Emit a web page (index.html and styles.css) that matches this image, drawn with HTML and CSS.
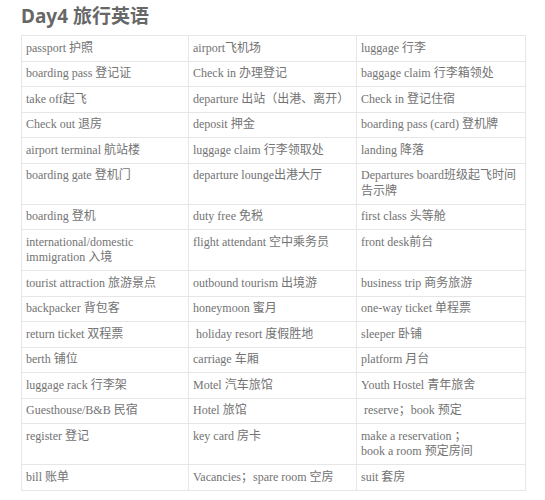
FILE: index.html
```html
<!DOCTYPE html>
<html lang="zh">
<head>
<meta charset="utf-8">
<title>Day4 旅行英语</title>
<link rel="stylesheet" href="styles.css">
</head>
<body>
<div class="page">
  <h1 class="title">Day4 旅行英语</h1>
  <table class="vocab">
    <colgroup><col class="c1"><col class="c2"><col class="c3"></colgroup>
    <tbody>
      <tr><td>passport 护照</td><td>airport飞机场</td><td>luggage 行李</td></tr>
      <tr><td>boarding pass 登记证</td><td>Check in 办理登记</td><td>baggage claim 行李箱领处</td></tr>
      <tr><td>take off起飞</td><td>departure 出站（出港、离开）</td><td>Check in 登记住宿</td></tr>
      <tr><td>Check out 退房</td><td>deposit 押金</td><td>boarding pass (card) 登机牌</td></tr>
      <tr><td>airport terminal 航站楼</td><td>luggage claim 行李领取处</td><td>landing 降落</td></tr>
      <tr><td>boarding gate 登机门</td><td>departure lounge出港大厅</td><td>Departures board班级起飞时间告示牌</td></tr>
      <tr><td>boarding 登机</td><td>duty free 免税</td><td>first class 头等舱</td></tr>
      <tr><td>international/domestic immigration 入境</td><td>flight attendant 空中乘务员</td><td>front desk前台</td></tr>
      <tr><td>tourist attraction 旅游景点</td><td>outbound tourism 出境游</td><td>business trip 商务旅游</td></tr>
      <tr><td>backpacker 背包客</td><td>honeymoon 蜜月</td><td>one-way ticket 单程票</td></tr>
      <tr><td>return ticket 双程票</td><td>&nbsp;holiday resort 度假胜地</td><td>sleeper 卧铺</td></tr>
      <tr><td>berth 铺位</td><td>carriage 车厢</td><td>platform 月台</td></tr>
      <tr><td>luggage rack 行李架</td><td>Motel 汽车旅馆</td><td>Youth Hostel 青年旅舍</td></tr>
      <tr><td>Guesthouse/B&amp;B 民宿</td><td>Hotel 旅馆</td><td>&nbsp;reserve；book 预定</td></tr>
      <tr><td>register 登记</td><td>key card 房卡</td><td>make a reservation ；<br>book a room 预定房间</td></tr>
      <tr><td>bill 账单</td><td>Vacancies；spare room 空房</td><td>suit 套房</td></tr>
    </tbody>
  </table>
</div>
</body>
</html>
```

FILE: styles.css
```css
html, body {
  margin: 0;
  padding: 0;
  background: #ffffff;
}
.page {
  padding: 0 20px 0 21px;
}
.title {
  margin: 0;
  padding-top: 4px;
  height: 31px;
  font-family: "Noto Sans", "Noto Sans CJK SC", sans-serif;
  font-weight: 700;
  font-size: 19px;
  line-height: 25px;
  color: #676767;
}
.vocab {
  width: 504px;
  border-collapse: collapse;
  table-layout: fixed;
  font-family: "Liberation Serif", "Noto Sans CJK SC", serif;
  font-size: 12px;
  line-height: 15.5px;
  color: #737373;
}
.c1 { width: 167px; }
.c2 { width: 168px; }
.c3 { width: 169px; }
.vocab td {
  border: 1px solid #e6e6e6;
  padding: 4.5px 4px 4.5px 4px;
  vertical-align: top;
}
```
